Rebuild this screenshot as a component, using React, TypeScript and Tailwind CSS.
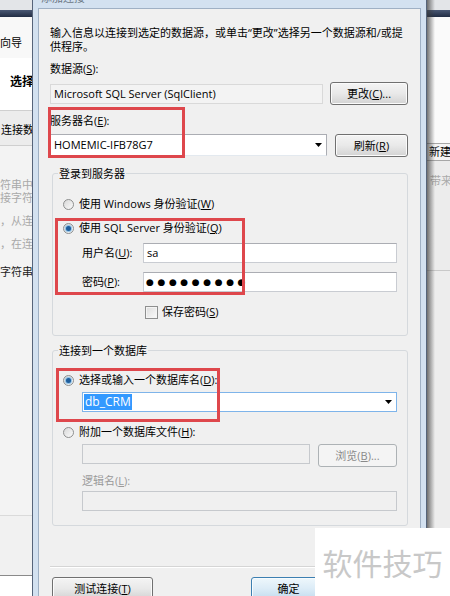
import type { ReactNode } from 'react'

// Win7 "添加连接" dialog over a wizard window, with red annotation boxes

const ui = "font-['Open_Sans','Noto_Sans_CJK_SC',sans-serif] text-[11px] leading-[14px]"

function Btn({ children, className = '', variant = 'normal' }: { children: ReactNode; className?: string; variant?: 'normal' | 'disabled' | 'default' }) {
  const look =
    variant === 'disabled'
      ? 'border-[#adb2b5] bg-[#f4f4f4] text-[#8a8a8a]'
      : variant === 'default'
        ? 'border-[#3c7fb1] bg-linear-to-b from-[#eef7fc] via-[#dcecf7] to-[#c3dcee] shadow-[inset_0_0_0_1px_#f6fbfe]'
        : 'border-[#707070] bg-linear-to-b from-[#f4f4f4] via-[#e9e9e9] to-[#d3d3d3] shadow-[inset_0_0_0_1px_#fbfbfb]'
  return (
    <div className={`flex h-[23px] shrink-0 items-center justify-center rounded-[3px] border ${look} ${className}`}>
      {children}
    </div>
  )
}

function Arrow() {
  return (
    <svg width="7" height="4" viewBox="0 0 7 4" className="shrink-0">
      <path d="M0 0h7L3.5 4z" fill="#000" />
    </svg>
  )
}

function Radio({ checked }: { checked?: boolean }) {
  return (
    <span className="flex h-[11px] w-[11px] shrink-0 items-center justify-center rounded-full border border-[#8e8f8f] bg-linear-to-br from-[#d8d8d8] to-[#fbfbfb]">
      {checked && <span className="h-[5px] w-[5px] rounded-full bg-[#1f5e9c] shadow-[0_0_1px_1px_#86bde6]" />}
    </span>
  )
}

function RadioRow({ checked, children, className = '' }: { checked?: boolean; children: ReactNode; className?: string }) {
  return (
    <div className={`flex h-[16px] items-center gap-[5px] pl-[10px] ${className}`}>
      <Radio checked={checked} />
      <span>{children}</span>
    </div>
  )
}

function LeftWindow() {
  return (
    <div className="flex w-[32px] shrink-0 flex-col overflow-hidden whitespace-nowrap bg-[#f3f3f3]">
      <div className="h-[10px] shrink-0 bg-[#e3e5e8]" />
      <div className="h-[7px] shrink-0 bg-linear-to-b from-[#4a5874] to-[#222d44]" />
      <div className="h-[41px] shrink-0 bg-[#f8f8f8] pt-[19px]">向导</div>
      <div className="h-[52px] shrink-0 bg-white pl-[10px] pt-[16px] text-[12px] font-bold leading-[16px]">选择您的数据连接</div>
      <div className="h-[36px] shrink-0 border-y border-[#cfcfcf] bg-[#ececec] pl-[1px] pt-[12px]">连接数据</div>
      <div className="flex flex-1 flex-col text-[#a9a9a9]">
        <div className="mt-[32px] leading-[13px]">符串中</div>
        <div className="leading-[13px]">接字符</div>
        <div className="mt-[10px] leading-[13px]">，从连</div>
        <div className="mt-[10px] leading-[13px]">，在连</div>
        <div className="mt-[15px] leading-[13px] text-[#222]">字符串</div>
      </div>
      <div className="h-[60px] shrink-0 border-t border-[#dadada] bg-[#f1f1f1]" />
      <div className="h-[21px] shrink-0 border-t border-[#8a8a8a] bg-white" />
    </div>
  )
}

function RightWindow() {
  return (
    <div className="relative flex flex-1 flex-col overflow-hidden whitespace-nowrap bg-[#ececec]">
      <div className="h-[10px] shrink-0 bg-[#e3e5e8]" />
      <div className="h-[7px] shrink-0 bg-linear-to-b from-[#4a5874] to-[#222d44]" />
      <div className="h-[126px] shrink-0 bg-[#fafafa]" />
      <div className="h-[18px] shrink-0 border-y border-[#a7a7a7] bg-[#f4f4f4] pl-[2px] pt-[1px]">新建连接</div>
      <div className="mt-[13px] pl-[3px] text-[#aaaaaa]">带来</div>
      <div className="mt-[82px] h-px bg-[#c9c9c9]" />
      <div className="flex-1 bg-[#ededed]" />
      <div className="absolute inset-y-0 left-0 w-[8px] bg-linear-to-r from-[#3a3a3a] to-transparent opacity-70" />
    </div>
  )
}

function Dialog() {
  return (
    <div className="flex w-[395px] shrink-0 flex-col border-x border-[#56647a] bg-[#d3e1f0]">
      <div className="h-[8px] shrink-0 overflow-hidden pl-[8px]">
        <div className="-mt-[9px] text-[#6b7784]">添加连接</div>
      </div>
      <div className="mx-[5px] flex flex-1 flex-col border border-[#9fb0c4] bg-[#f0f0f0] pl-[11px] pr-[12px] pt-[17px]">
        <p>输入信息以连接到选定的数据源，或单击“更改”选择另一个数据源和/或提供程序。</p>

        <div className="mt-[8px]">数据源(<u>S</u>):</div>
        <div className="mt-[6px] flex items-center gap-[7px]">
          <div className="flex h-[20px] flex-1 items-center border border-[#d9d9d9] bg-[#f3f3f3] pl-[3px]">
            Microsoft SQL Server (SqlClient)
          </div>
          <Btn className="w-[78px]">更改(<u>C</u>)...</Btn>
        </div>

        <div className="mt-[9px]">服务器名(<u>E</u>):</div>
        <div className="mt-[6px] flex items-start gap-[8px]">
          <div className="flex h-[22px] flex-1 items-center justify-between border border-[#abadb3] border-b-[#e3e9ef] bg-white pl-[3px] pr-[4px]">
            <span>HOMEMIC-IFB78G7</span>
            <Arrow />
          </div>
          <Btn className="w-[73px]">刷新(<u>R</u>)</Btn>
        </div>

        <fieldset className="ml-[2px] mt-[9px] rounded-[3px] border border-[#d5d9dd] pb-[15px]">
          <legend className="ml-[5px] px-[1px] leading-[15px]">登录到服务器</legend>
          <RadioRow className="mt-[15px]">使用 Windows 身份验证(<u>W</u>)</RadioRow>
          <RadioRow checked className="mt-[8px]">使用 SQL Server 身份验证(<u>Q</u>)</RadioRow>
          <div className="mt-[7px] flex items-center pl-[29px] pr-[10px]">
            <span className="w-[61px] shrink-0">用户名(<u>U</u>):</span>
            <div className="flex h-[20px] flex-1 items-center border border-[#c9ccd2] border-t-[#abadb3] bg-white pl-[3px]">sa</div>
          </div>
          <div className="mt-[9px] flex items-center pl-[29px] pr-[10px]">
            <span className="w-[61px] shrink-0">密码(<u>P</u>):</span>
            <div className="flex h-[20px] flex-1 items-center border border-[#c9ccd2] border-t-[#abadb3] bg-white pl-[2px] font-['DejaVu_Sans',sans-serif] text-[9px] tracking-[3.6px]">
              ●●●●●●●●●
            </div>
          </div>
          <div className="mt-[12px] flex h-[16px] items-center gap-[4px] pl-[92px]">
            <span className="h-[13px] w-[13px] shrink-0 border border-[#8e8f8f] bg-linear-to-br from-[#dcdcdc] to-[#fbfbfb] shadow-[inset_0_0_0_1px_#f4f4f4]" />
            <span>保存密码(<u>S</u>)</span>
          </div>
        </fieldset>

        <fieldset className="ml-[2px] mt-[7px] rounded-[3px] border border-[#d5d9dd] pb-[14px]">
          <legend className="ml-[5px] px-[1px] leading-[15px]">连接到一个数据库</legend>
          <RadioRow checked className="mt-[14px]">选择或输入一个数据库名(<u>D</u>):</RadioRow>
          <div className="mt-[4px] pl-[29px] pr-[10px]">
            <div className="flex h-[20px] items-center justify-between border border-[#7eb4ea] bg-white pl-[1px] pr-[4px]">
              <span className="bg-[#3399ff] px-[1px] text-[12px] leading-[16px] text-white">db_CRM</span>
              <Arrow />
            </div>
          </div>
          <RadioRow className="mt-[12px]">附加一个数据库文件(<u>H</u>):</RadioRow>
          <div className="mt-[4px] flex items-start gap-[8px] pl-[29px] pr-[10px]">
            <div className="h-[20px] flex-1 border border-[#c6c9cd] bg-[#f0f0f0]" />
            <Btn variant="disabled" className="w-[79px]">浏览(<u>B</u>)...</Btn>
          </div>
          <div className="mt-[7px] pl-[29px] text-[#9a9a9a]">逻辑名(<u>L</u>):</div>
          <div className="mt-[3px] pl-[29px] pr-[10px]">
            <div className="h-[20px] border border-[#c6c9cd] bg-[#f0f0f0]" />
          </div>
        </fieldset>

        <div className="mt-[40px] h-[2px] shrink-0 border-t border-b border-t-[#d5d5d5] border-b-white" />
        <div className="mt-[9px] flex gap-[7px] pl-[2px]">
          <Btn className="w-[101px]">测试连接(<u>T</u>)</Btn>
          <div className="flex-1" />
          <Btn variant="default" className="w-[75px]">确定</Btn>
          <Btn className="w-[75px]">取消</Btn>
        </div>
      </div>
    </div>
  )
}

export default function App() {
  return (
    <div className={`relative flex h-[596px] w-[450px] overflow-hidden bg-[#f0f0f0] text-black ${ui}`}>
      <LeftWindow />
      <Dialog />
      <RightWindow />

      {/* red annotation boxes */}
      <div className="absolute left-[48px] top-[107px] h-[51px] w-[137px] border-[3px] border-[#de474c]" />
      <div className="absolute left-[55px] top-[218px] h-[77px] w-[190px] border-[3px] border-[#de474c]" />
      <div className="absolute left-[56px] top-[368px] h-[54px] w-[164px] border-[3px] border-[#de474c]" />

      {/* watermark */}
      <div className="absolute left-[315px] top-[528px] flex h-[68px] w-[135px] items-center justify-center bg-white font-['Noto_Sans_CJK_SC',sans-serif] text-[30px] leading-none text-[#c8c8c8]">
        软件技巧
      </div>
    </div>
  )
}
